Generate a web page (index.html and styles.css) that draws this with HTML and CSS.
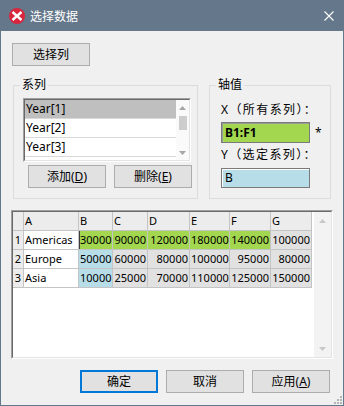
FILE: index.html
```html
<!DOCTYPE html>
<html lang="zh-CN">
<head>
    <meta charset="UTF-8">
    <title>选择数据</title>
    <link rel="stylesheet" href="styles.css">
</head>
<body>

<div class="window">
    <div class="titlebar">
        <svg class="title-icon" width="16" height="16" viewBox="0 0 16 16">
            <circle cx="8" cy="8" r="8" fill="#d7263d"/>
            <path d="M3.5 4 L8 8 L3.5 12 M12.5 4 L8 8 L12.5 12" stroke="#fff" stroke-width="2.4" fill="none"/>
        </svg>
        <span class="title">选择数据</span>
        <svg class="close" width="10" height="10" viewBox="0 0 10 10">
            <path d="M0.5 0.5 L9.5 9.5 M9.5 0.5 L0.5 9.5" stroke="#fff" stroke-width="1.1"/>
        </svg>
    </div>

    <div class="content">
        <button class="btn">选择列</button>

        <div class="groups">
            <fieldset class="group series">
                <legend>系列</legend>
                <div class="series-body">
                    <div class="listbox">
                        <div class="listbox-inner">
                            <div class="items">
                                <div class="item selected">Year[1]</div>
                                <div class="item">Year[2]</div>
                                <div class="item">Year[3]</div>
                                <div class="item"></div>
                            </div>
                            <div class="vscroll">
                                <svg class="arrow up" width="7" height="4" viewBox="0 0 7 4"><path d="M0 4 L3.5 0 L7 4 Z" fill="#a6a6a6"/></svg>
                                <div class="thumb"></div>
                                <svg class="arrow down" width="7" height="4" viewBox="0 0 7 4"><path d="M0 0 L3.5 4 L7 0 Z" fill="#a6a6a6"/></svg>
                            </div>
                        </div>
                    </div>
                    <div class="series-btns">
                        <button class="btn">添加(<u>D</u>)</button>
                        <button class="btn">删除(<u>E</u>)</button>
                    </div>
                </div>
            </fieldset>

            <fieldset class="group axis">
                <legend>轴值</legend>
                <div class="axis-body">
                    <div class="axis-label">X（所有系列）：</div>
                    <div class="field-row">
                        <div class="field green">B1:F1</div>
                        <span class="star">*</span>
                    </div>
                    <div class="axis-label second">Y（选定系列）：</div>
                    <div class="field-row">
                        <div class="field blue">B</div>
                    </div>
                </div>
            </fieldset>
        </div>

        <div class="sheet">
            <div class="sheet-inner">
                <div class="sheet-area">
                    <div class="cells">
                        <div class="c h"></div>
                        <div class="c h">A</div>
                        <div class="c h">B</div>
                        <div class="c h">C</div>
                        <div class="c h">D</div>
                        <div class="c h">E</div>
                        <div class="c h">F</div>
                        <div class="c h">G</div>

                        <div class="c rh">1</div>
                        <div class="c txt">Americas</div>
                        <div class="c g mark">30000</div>
                        <div class="c g">90000</div>
                        <div class="c g">120000</div>
                        <div class="c g">180000</div>
                        <div class="c g">140000</div>
                        <div class="c">100000</div>

                        <div class="c rh">2</div>
                        <div class="c txt">Europe</div>
                        <div class="c b">50000</div>
                        <div class="c">60000</div>
                        <div class="c">80000</div>
                        <div class="c">100000</div>
                        <div class="c">95000</div>
                        <div class="c">80000</div>

                        <div class="c rh">3</div>
                        <div class="c txt">Asia</div>
                        <div class="c b">10000</div>
                        <div class="c">25000</div>
                        <div class="c">70000</div>
                        <div class="c">110000</div>
                        <div class="c">125000</div>
                        <div class="c">150000</div>
                    </div>
                </div>
                <div class="sheet-scroll">
                    <svg width="7" height="4" viewBox="0 0 7 4"><path d="M0 4 L3.5 0 L7 4 Z" fill="#c8c8c8"/></svg>
                    <svg width="7" height="4" viewBox="0 0 7 4"><path d="M0 0 L3.5 4 L7 0 Z" fill="#c8c8c8"/></svg>
                </div>
            </div>
        </div>

        <div class="actions">
            <button class="btn primary">确定</button>
            <button class="btn">取消</button>
            <button class="btn">应用(<u>A</u>)</button>
        </div>
    </div>

    <svg class="grip" width="8" height="8" viewBox="0 0 8 8">
        <rect x="6" y="0" width="2" height="2" fill="#b4b4b4"/>
        <rect x="3" y="3" width="2" height="2" fill="#b4b4b4"/>
        <rect x="6" y="3" width="2" height="2" fill="#b4b4b4"/>
        <rect x="0" y="6" width="2" height="2" fill="#b4b4b4"/>
        <rect x="3" y="6" width="2" height="2" fill="#b4b4b4"/>
        <rect x="6" y="6" width="2" height="2" fill="#b4b4b4"/>
    </svg>
</div>

</body>
</html>
```

FILE: styles.css
```css
body {
    margin: 0;
    font-family: "Noto Sans", "Noto Sans CJK SC", sans-serif;
    font-size: 12px;
    color: #000;
}
.window {
    position: relative;
    width: 344px;
    height: 406px;
    box-sizing: border-box;
    border: 1px solid #65778a;
    background: #f0f0f0;
    display: flex;
    flex-direction: column;
}
.titlebar {
    height: 30px;
    flex-shrink: 0;
    display: flex;
    align-items: center;
    padding: 0 9px 0 8px;
    background: #65778a;
    color: #fff;
}
.title-icon {
    margin-right: 5px;
}
.title {
    flex: 1;
}
.content {
    padding: 12px 11px 0 11px;
}
.btn {
    width: 78px;
    height: 23px;
    box-sizing: border-box;
    padding: 0;
    border: 1px solid #adadad;
    background: #e1e1e1;
    font: inherit;
    color: #000;
    line-height: 20px;
}
.btn.primary {
    border: 2px solid #0078d7;
}

/* group boxes */
.groups {
    display: flex;
    gap: 11px;
    margin-top: 12px;
    padding-left: 1px;
}
.group {
    margin: 0;
    padding: 0;
    min-width: 0;
    height: 121px;
    box-sizing: border-box;
    border: 1px solid #dcdcdc;
}
.group legend {
    margin-left: 6px;
    padding: 0 2px;
    line-height: 14px;
}
.series {
    width: 185px;
}
.axis {
    width: 122px;
}
.series-body {
    padding: 6px 0 0 9px;
}
.listbox {
    width: 168px;
    height: 64px;
    box-sizing: border-box;
    border: 1px solid;
    border-color: #a0a0a0 #ffffff #ffffff #a0a0a0;
}
.listbox-inner {
    height: 100%;
    box-sizing: border-box;
    border: 1px solid;
    border-color: #696969 #e3e3e3 #e3e3e3 #696969;
    background: #fff;
    display: flex;
    overflow: hidden;
}
.items {
    flex: 1;
    overflow: hidden;
}
.item {
    height: 18px;
    line-height: 18px;
    padding-left: 1px;
    border-bottom: 1px solid #d9d9d9;
    white-space: nowrap;
}
.item.selected {
    background: #bfbfbf;
}
.vscroll {
    width: 13px;
    background: #fafafa;
    display: flex;
    flex-direction: column;
    align-items: center;
}
.vscroll .up {
    margin-top: 6px;
}
.thumb {
    width: 8px;
    height: 14px;
    margin-top: 6px;
    background: #cdcdcd;
}
.vscroll .down {
    margin-top: auto;
    margin-bottom: 5px;
}
.series-btns {
    display: flex;
    gap: 8px;
    margin: 3px 0 0 5px;
}
.axis-body {
    padding: 10px 0 0 11px;
}
.axis-label {
    line-height: 16px;
    letter-spacing: 1.4px;
}
.axis-label.second {
    margin-top: 4px;
}
.field-row {
    display: flex;
    align-items: center;
    margin-top: 4px;
}
.field {
    width: 89px;
    box-sizing: border-box;
    padding-left: 3px;
    border: 1px solid #7a7a7a;
    box-shadow: inset 1px 1px #9a9a9a;
}
.field.green {
    height: 21px;
    line-height: 19px;
    background: #a3d750;
    font-weight: bold;
}
.field.blue {
    height: 20px;
    line-height: 18px;
    margin-top: 1px;
    background: #b7dde8;
    box-shadow: inset 1px 1px #ffffff;
}
.star {
    margin-left: 5px;
}

/* spreadsheet preview */
.sheet {
    width: 322px;
    height: 149px;
    box-sizing: border-box;
    margin: 11px 0 0 -1px;
    border: 1px solid;
    border-color: #a0a0a0 #ffffff #ffffff #a0a0a0;
}
.sheet-inner {
    height: 100%;
    box-sizing: border-box;
    border: 1px solid;
    border-color: #696969 #e3e3e3 #e3e3e3 #696969;
    background: #fff;
    display: flex;
}
.sheet-area {
    flex: 1;
}
.cells {
    display: grid;
    grid-template-columns: 10px 54px 33px 34px 41px 39px 40px 40px;
    grid-auto-rows: 18px;
    gap: 1px;
    width: max-content;
    padding: 0 1px 1px 0;
    background: #c4c4c4;
}
.c {
    padding: 0 1px;
    line-height: 18px;
    font-size: 11px;
    text-align: right;
    white-space: nowrap;
    overflow: hidden;
    background: #e1e1e1;
}
.c.h {
    background: #ececec;
    text-align: left;
}
.c.rh {
    background: #ececec;
    text-align: center;
    padding: 0;
}
.c.txt {
    background: #fff;
    text-align: left;
}
.c.g {
    background: #a3d750;
}
.c.b {
    background: #b7dde8;
}
.c.mark {
    box-shadow: inset 1px 0 #3c3c3c;
}
.sheet-scroll {
    width: 17px;
    background: #f3f3f3;
    display: flex;
    flex-direction: column;
    justify-content: space-between;
    align-items: center;
    padding: 7px 0 6px;
    box-sizing: border-box;
}
.actions {
    display: flex;
    justify-content: flex-end;
    gap: 8px;
    margin-top: 11px;
    padding-right: 2px;
}
.grip {
    position: absolute;
    right: 1px;
    bottom: 1px;
}
```
